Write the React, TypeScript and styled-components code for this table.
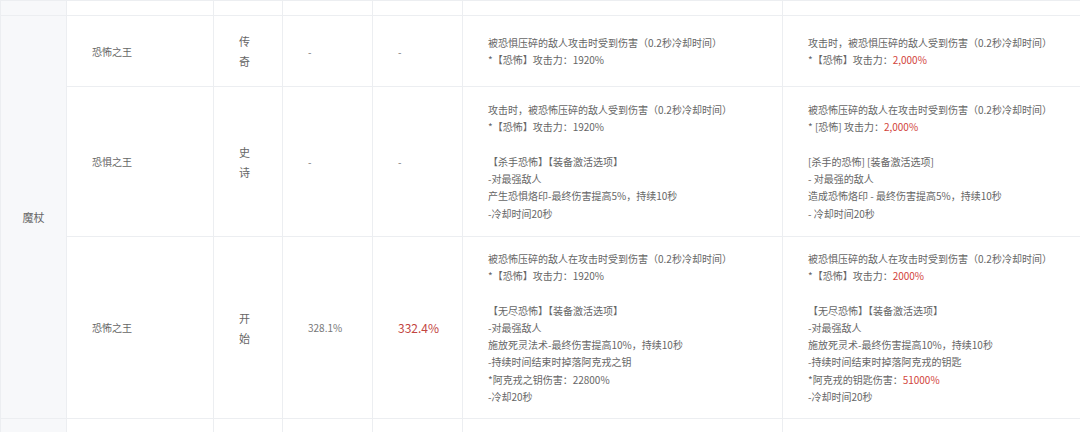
import React from 'react';
import styled, { createGlobalStyle } from 'styled-components';

const GlobalStyle = createGlobalStyle`
	html, body {
		margin: 0;
		padding: 0;
		background: #ffffff;
	}
	body {
		font-family: "Noto Sans CJK SC", "Noto Sans", sans-serif;
		color: #666666;
	}
`;

type Line = string | [string, string];

type Row = {
	name: string;
	grade: string;
	before: string;
	after: string;
	afterRed?: boolean;
	height: number;
	left: Line[];
	right: Line[];
};

const rows: Row[] = [
	{
		name: '恐怖之王',
		grade: '传奇',
		before: '-',
		after: '-',
		height: 71,
		left: ['被恐惧压碎的敌人攻击时受到伤害（0.2秒冷却时间）', '*【恐怖】攻击力：1920%'],
		right: ['攻击时，被恐惧压碎的敌人受到伤害（0.2秒冷却时间）', ['*【恐怖】攻击力：', '2,000%']],
	},
	{
		name: '恐惧之王',
		grade: '史诗',
		before: '-',
		after: '-',
		height: 150,
		left: [
			'攻击时，被恐怖压碎的敌人受到伤害（0.2秒冷却时间）',
			'*【恐怖】攻击力：1920%',
			'',
			'【杀手恐怖】【装备激活选项】',
			'-对最强敌人',
			'产生恐惧烙印-最终伤害提高5%，持续10秒',
			'-冷却时间20秒',
		],
		right: [
			'被恐怖压碎的敌人在攻击时受到伤害（0.2秒冷却时间）',
			['* [恐怖] 攻击力：', '2,000%'],
			'',
			'[杀手的恐怖] [装备激活选项]',
			'- 对最强的敌人',
			'造成恐怖烙印 - 最终伤害提高5%，持续10秒',
			'- 冷却时间20秒',
		],
	},
	{
		name: '恐怖之王',
		grade: '开始',
		before: '328.1%',
		after: '332.4%',
		afterRed: true,
		height: 182,
		left: [
			'被恐怖压碎的敌人在攻击时受到伤害（0.2秒冷却时间）',
			'*【恐怖】攻击力：1920%',
			'',
			'【无尽恐怖】【装备激活选项】',
			'-对最强敌人',
			'施放死灵法术-最终伤害提高10%，持续10秒',
			'-持续时间结束时掉落阿克戎之钥',
			'*阿克戎之钥伤害：22800%',
			'-冷却20秒',
		],
		right: [
			'被恐惧压碎的敌人在攻击时受到伤害（0.2秒冷却时间）',
			['*【恐怖】攻击力：', '2000%'],
			'',
			'【无尽恐怖】【装备激活选项】',
			'-对最强敌人',
			'施放死灵术-最终伤害提高10%，持续10秒',
			'-持续时间结束时掉落阿克戎的钥匙',
			['*阿克戎的钥匙伤害：', '51000%'],
			'-冷却时间20秒',
		],
	},
];

const colWidths = [66, 147, 69, 90, 90, 320, 321];

const renderLines = (lines: Line[]) =>
	lines.map((l, i) => (
		<DescLine key={i}>
			{typeof l === 'string' ? (
				l || '\u00a0'
			) : (
				<>
					{l[0]}
					<Red>{l[1]}</Red>
				</>
			)}
		</DescLine>
	));

export default function App() {
	return (
		<>
			<GlobalStyle />
			<Viewport>
				<Table>
					<colgroup>
						{colWidths.map((w, i) => (
							<col key={i} style={{ width: w }} />
						))}
					</colgroup>
					<tbody>
						<BodyRow $height={15}>
							<TypeCell />
							{colWidths.slice(1).map((_, i) => (
								<StubCell key={i} />
							))}
						</BodyRow>
						{rows.map((r, idx) => (
							<BodyRow key={idx} $height={r.height}>
								{idx === 0 && <TypeCell rowSpan={rows.length}>魔杖</TypeCell>}
								<Cell>{r.name}</Cell>
								<Cell>
									<Grade>{r.grade}</Grade>
								</Cell>
								<Cell>
									<Value>{r.before}</Value>
								</Cell>
								<Cell>
									<Value $red={r.afterRed}>{r.after}</Value>
								</Cell>
								<DescCell>{renderLines(r.left)}</DescCell>
								<DescCell>{renderLines(r.right)}</DescCell>
							</BodyRow>
						))}
						<BodyRow $height={20}>
							<TypeCell />
							{colWidths.slice(1).map((_, i) => (
								<StubCell key={i} />
							))}
						</BodyRow>
					</tbody>
				</Table>
			</Viewport>
		</>
	);
}

const Viewport = styled.div`
	width: 1080px;
	height: 432px;
	overflow: hidden;
	background: #ffffff;
`;

const Table = styled.table`
	width: 1103px;
	table-layout: fixed;
	border-collapse: collapse;
	font-size: 10px;
	color: #666666;
	border-left: 1px solid #eceef1;
`;

const BodyRow = styled.tr<{ $height: number }>`
	height: ${(p) => p.$height}px;
`;

const Cell = styled.td`
	border: 1px solid #eceef1;
	padding: 10px 12px 10px 25px;
	vertical-align: middle;
	text-align: left;
	line-height: 17px;
	color: #666666;
	white-space: nowrap;
`;

const StubCell = styled.td`
	border: 1px solid #eceef1;
	padding: 0;
`;

const TypeCell = styled.td`
	border: 1px solid #eceef1;
	background: #f7f8fa;
	text-align: center;
	vertical-align: middle;
	font-size: 11px;
	color: #666666;
	padding: 0;
`;

const Grade = styled.div`
	width: 12px;
	font-size: 11px;
	line-height: 20px;
	word-break: break-all;
	white-space: normal;
	color: #666666;
`;

const Value = styled.span<{ $red?: boolean }>`
	font-size: ${(p) => (p.$red ? '12px' : '10px')};
	color: ${(p) => (p.$red ? '#c2453f' : '#777777')};
`;

const DescCell = styled.td`
	border: 1px solid #eceef1;
	padding: 10px 12px 10px 25px;
	vertical-align: middle;
	font-size: 10px;
	color: #666666;
`;

const DescLine = styled.div`
	line-height: 17.25px;
	white-space: nowrap;
`;

const Red = styled.span`
	color: #d2443c;
`;
